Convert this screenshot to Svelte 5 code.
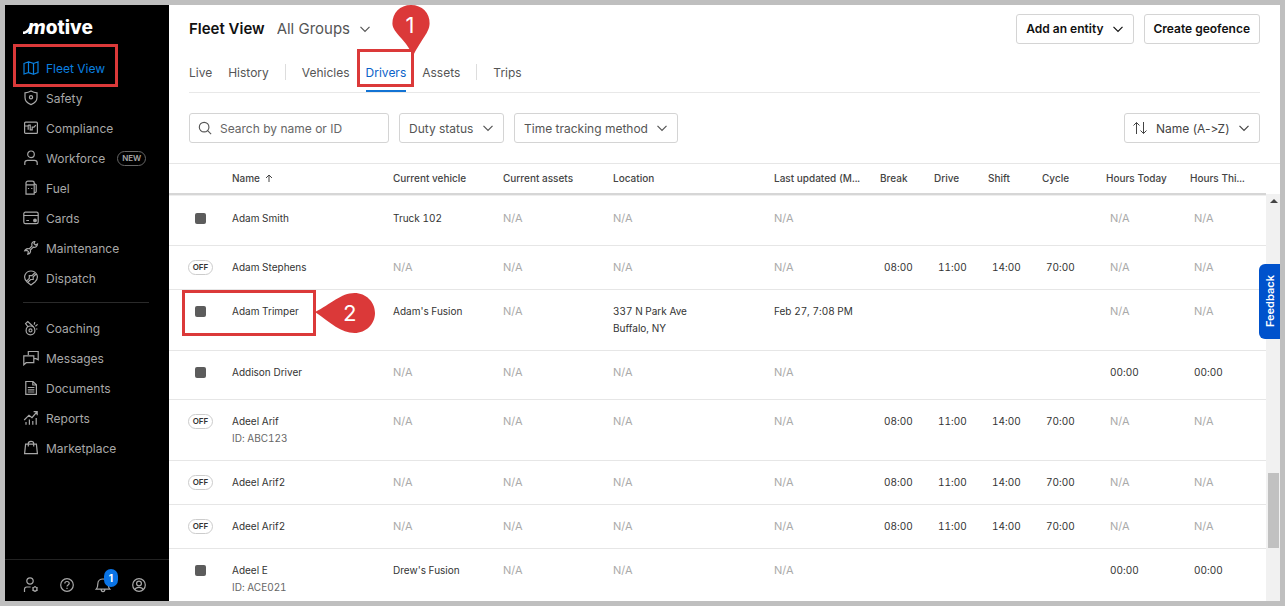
<script>
  let search = "";
  let group = "All Groups";
  let duty = "Duty status";
  let tracking = "Time tracking method";
  let sort = "Name (A->Z)";
  let activeTab = "Drivers";

  const mainNav = [
    { label: "Fleet View", icon: "map", active: true },
    { label: "Safety", icon: "shield" },
    { label: "Compliance", icon: "compliance" },
    { label: "Workforce", icon: "person", tag: "NEW" },
    { label: "Fuel", icon: "fuel" },
    { label: "Cards", icon: "card" },
    { label: "Maintenance", icon: "wrench" },
    { label: "Dispatch", icon: "dispatch" },
  ];

  const moreNav = [
    { label: "Coaching", icon: "whistle" },
    { label: "Messages", icon: "messages" },
    { label: "Documents", icon: "document" },
    { label: "Reports", icon: "reports" },
    { label: "Marketplace", icon: "bag" },
  ];

  const footer = [
    { label: "Admin", icon: "admin" },
    { label: "Help", icon: "help" },
    { label: "Notifications", icon: "bell", count: 1 },
    { label: "Profile", icon: "profile" },
  ];

  const tabGroups = [["Live", "History"], ["Vehicles", "Drivers", "Assets"], ["Trips"]];

  const columns = [
    { label: "", width: 63 },
    { label: "Name", width: 161, sorted: true },
    { label: "Current vehicle", width: 110 },
    { label: "Current assets", width: 110 },
    { label: "Location", width: 161 },
    { label: "Last updated (M...", width: 106 },
    { label: "Break", width: 54 },
    { label: "Drive", width: 54 },
    { label: "Shift", width: 54 },
    { label: "Cycle", width: 64 },
    { label: "Hours Today", width: 84 },
    { label: "Hours Thi...", width: 76 },
  ];

  const clocks = ["08:00", "11:00", "14:00", "70:00"];
  const none = ["", "", "", ""];

  const drivers = [
    { name: "Adam Smith", vehicle: "Truck 102", clocks: none },
    { name: "Adam Stephens", off: true, clocks },
    {
      name: "Adam Trimper",
      vehicle: "Adam's Fusion",
      location: ["337 N Park Ave", "Buffalo, NY"],
      updated: "Feb 27, 7:08 PM",
      clocks: none,
      marked: true,
    },
    { name: "Addison Driver", clocks: none, hours: "00:00" },
    { name: "Adeel Arif", id: "ABC123", off: true, clocks },
    { name: "Adeel Arif2", off: true, clocks },
    { name: "Adeel Arif2", off: true, clocks },
    { name: "Adeel E", id: "ACE021", vehicle: "Drew's Fusion", clocks: none, hours: "00:00" },
  ];

  const rowSize = (d) => {
    if (d.id || d.location) return "tall";
    return d.off ? "short" : "medium";
  };
</script>

{#snippet icon(name)}
  <svg class="icon" viewBox="0 0 16 16" aria-hidden="true">
    {#if name === "map"}
      <path d="M1 3.5 L5.5 1.8 V12.6 L1 14 Z M5.5 1.8 L10.5 3.5 V14.2 L5.5 12.6 M10.5 3.5 L15 1.8 V12.6 L10.5 14.2" />
    {:else if name === "shield"}
      <path d="M8 1 C10 2.2 12 2.7 14 2.8 V7.5 C14 11 11 13.5 8 14.6 C5 13.5 2 11 2 7.5 V2.8 C4 2.7 6 2.2 8 1 Z" />
      <circle cx="8" cy="7.3" r="1.6" />
    {:else if name === "compliance"}
      <rect x="1.6" y="2.2" width="12.8" height="11.2" rx="1" />
      <path d="M2 6 H5.2 M5.2 5 V9.8 M5.2 5.2 H7.2 V9.8 H9.2 V7.2 H11 L12.8 5.2" />
    {:else if name === "person"}
      <circle cx="8" cy="4.3" r="3.3" />
      <path d="M1.8 15 V12.8 C1.8 11.2 3 10.3 4.5 10.3 H11.5 C13 10.3 14.2 11.2 14.2 12.8 V15" />
    {:else if name === "fuel"}
      <path d="M3 14.2 V3 C3 1.8 3.8 1.2 5 1.2 H9.2 C10.4 1.2 11.2 1.8 11.2 3 V14.2 Z M3 4.8 H11.2 M5.5 8 V9 M8.8 8 V9 M11.2 3.5 L13.2 4.8 V11.5 C13.2 12.3 12.5 12.6 11.2 12.5" />
    {:else if name === "card"}
      <rect x="0.8" y="2.2" width="14.4" height="11.4" rx="1.6" />
      <path d="M0.8 5.5 H15.2 M3.3 10.5 H6" />
      <circle class="solid" cx="12" cy="10.4" r="1.3" />
    {:else if name === "wrench"}
      <path d="M11.8 1.5 C9.8 1.3 8.2 3.2 8.9 5.2 L9 6 L6.2 8.8 C4.6 8.2 2.4 8.8 1.7 10.8 L4 10.3 L5.4 11.7 L4.8 14.2 C7 13.8 8 11.8 7.4 10 L10.3 7.1 C12.2 7.8 14.5 6.3 14.5 4 L12.5 5 L11 3.6 Z" />
    {:else if name === "dispatch"}
      <path d="M8 15 L3.8 11.7 C-1 6.7 3 1 8 1 C13 1 17 6.7 12.2 11.7 Z M3.8 10.8 L6.3 8.3 V5.6 H9 L11.7 3 M5 12 L7.6 9.5 H10.2 V6.8 L12.9 4.2" />
    {:else if name === "whistle"}
      <circle cx="7.5" cy="10.4" r="4.4" />
      <circle cx="7.5" cy="10.4" r="1.5" />
      <path d="M5 6.8 L2.6 3.6 L4.8 1.6 L10.6 7 M11.2 4.6 L11.8 2.2 M12.4 6.2 L14.6 4.4 M13 9 H14.4" />
    {:else if name === "messages"}
      <path d="M5.3 5 V1.5 H15.2 V9.7 L13 8.6 H11 M0.8 14.8 V5.8 H10.8 V12.7 H3.2 Z" />
    {:else if name === "document"}
      <path d="M2.8 1.5 H10 L13.4 4.8 V14.3 H2.8 Z M9.8 1.7 V5 H13.2 M4.8 7.5 H11.4 M4.8 9.8 H11.4 M4.8 12 H11.4" />
    {:else if name === "reports"}
      <path d="M1.2 10 L6 5.2 L9 7.6 L13.8 2 M10.6 1.6 H14.2 V5.2 M3 12 V14.8 M6.4 9.5 V14.8 M9.8 11 V14.8 M13.2 8 V14.8" />
    {:else if name === "bag"}
      <path d="M2.6 4.2 H13.4 L14.4 13.6 H1.6 Z M5.3 6.4 V3.4 C5.3 0.7 10.7 0.7 10.7 3.4 V6.4" />
    {:else if name === "admin"}
      <circle cx="7" cy="4" r="3.2" />
      <path d="M1.5 15 V12.3 C1.5 10.8 2.5 10 3.8 10 H7.6" />
      <circle cx="12" cy="12" r="2" />
      <path d="M12 9 V10 M12 14 V15 M9.4 10.5 L10.3 11 M13.7 13 L14.6 13.5 M9.4 13.5 L10.3 13 M13.7 11 L14.6 10.5" />
    {:else if name === "help"}
      <circle cx="8" cy="8" r="6.3" />
      <path d="M5.8 6.5 C5.8 3.8 10.2 3.9 10.2 6.4 C10.2 8 8 8 8 9.6 M8 10.8 V12" />
    {:else if name === "bell"}
      <path d="M1.2 12.2 C2.8 10.8 2.8 9 2.8 7 C2.8 0.3 13.2 0.3 13.2 7 C13.2 9 13.2 10.8 14.8 12.2 Z M6.2 12.5 C6.2 15.2 9.8 15.2 9.8 12.5" />
    {:else if name === "profile"}
      <circle cx="8" cy="8" r="6.3" />
      <circle cx="8" cy="6.5" r="2.4" />
      <path d="M4 12.6 C4.6 10.4 5.8 10.4 8 10.4 C10.2 10.4 11.4 10.4 12 12.6" />
    {/if}
  </svg>
{/snippet}

{#snippet chevron()}
  <svg class="chevron" viewBox="0 0 12 12" aria-hidden="true"><path d="M1.5 3.8 L6 8.3 L10.5 3.8" /></svg>
{/snippet}

{#snippet navItem(item)}
  <li>
    <a href="#{item.icon}" class:active={item.active}>
      {@render icon(item.icon)}
      <span>{item.label}</span>
      {#if item.tag}<em class="tag">{item.tag}</em>{/if}
    </a>
    {#if item.active}<div class="mark mark-nav"></div>{/if}
  </li>
{/snippet}

{#snippet value(v)}
  {#if v === undefined}<span class="na">N/A</span>{:else}{v}{/if}
{/snippet}

<div class="app">
  <aside>
    <a class="logo" href="#home" aria-label="motive">
      <svg viewBox="0 0 9 16" aria-hidden="true"><path d="M0 15 V12.6 C3 12.6 4.5 10.5 7 6.5 L9 8 C6.5 12.5 4.5 15 0 15 Z" /></svg>
      <span><i>m</i>otive</span>
    </a>
    <nav>
      <ul>
        {#each mainNav as item}{@render navItem(item)}{/each}
      </ul>
      <hr />
      <ul>
        {#each moreNav as item}{@render navItem(item)}{/each}
      </ul>
    </nav>
    <div class="foot">
      {#each footer as item}
        <button aria-label={item.label}>
          {@render icon(item.icon)}
          {#if item.count}<span class="count">{item.count}</span>{/if}
        </button>
      {/each}
    </div>
  </aside>

  <main>
    <header>
      <h1>Fleet View</h1>
      <div class="select plain">
        <select aria-label="Group" bind:value={group}><option>All Groups</option></select>
        {@render chevron()}
      </div>
      <div class="actions">
        <button class="btn">Add an entity {@render chevron()}</button>
        <button class="btn">Create geofence</button>
      </div>
    </header>

    <div class="tabs">
      {#each tabGroups as tabs, i}
        {#if i > 0}<span class="sep"></span>{/if}
        {#each tabs as tab}
          <button class="tab" class:current={tab === activeTab} on:click={() => (activeTab = tab)}>
            {tab}
            {#if tab === "Drivers"}
              <span class="mark mark-tab"></span>
              <svg class="pin pin-one" viewBox="0 0 38 51" aria-hidden="true">
                <path d="M19 0 C30 0 38 8 37.6 18.5 C37.2 28 30 33 21 51 C14 34 .6 28 .4 18.5 C.3 8 8 0 19 0 Z" />
                <text x="18" y="28">1</text>
              </svg>
            {/if}
          </button>
        {/each}
      {/each}
    </div>

    <div class="filters">
      <label class="search">
        <svg viewBox="0 0 16 16" aria-hidden="true"><circle cx="7" cy="7" r="5.5" /><path d="M11 11 L15 15" /></svg>
        <input type="text" placeholder="Search by name or ID" aria-label="Search by name or ID" bind:value={search} />
      </label>
      <div class="select">
        <select aria-label="Duty status" bind:value={duty}><option>Duty status</option></select>
        {@render chevron()}
      </div>
      <div class="select">
        <select aria-label="Time tracking method" bind:value={tracking}><option>Time tracking method</option></select>
        {@render chevron()}
      </div>
      <div class="select sort">
        <svg class="arrows" viewBox="0 0 16 14" aria-hidden="true"><path d="M4.5 13 V1.5 M1.5 4.5 L4.5 1.5 L7.5 4.5 M11.5 1 V12.5 M8.5 9.5 L11.5 12.5 L14.5 9.5" /></svg>
        <select aria-label="Sort" bind:value={sort}><option>{"Name (A->Z)"}</option></select>
        {@render chevron()}
      </div>
    </div>

    <div class="grid">
      <div class="table-wrap">
        <table>
          <colgroup>
            {#each columns as col}<col style="width: {col.width}px" />{/each}
          </colgroup>
          <thead>
            <tr>
              {#each columns as col}
                <th scope="col">
                  {col.label}
                  {#if col.sorted}
                    <svg class="up" viewBox="0 0 8 8" aria-hidden="true"><path d="M4 8 V1 M1 4 L4 1 L7 4" /></svg>
                  {/if}
                </th>
              {/each}
            </tr>
          </thead>
          <tbody>
            {#each drivers as d}
              <tr class={rowSize(d)}>
                <td class="status">
                  <div class="status-box">
                    {#if d.off}<span class="off">OFF</span>{:else}<span class="square"></span>{/if}
                    {#if d.marked}
                      <div class="mark mark-row"></div>
                      <svg class="pin pin-two" viewBox="0 0 60 40" aria-hidden="true">
                        <path d="M0 19 C16 11 26 0 39.5 0 C51 0 60 9 60 20 C60 31 51 40 39.5 40 C26 40 16 30 0 19 Z" />
                        <text x="35" y="28">2</text>
                      </svg>
                    {/if}
                  </div>
                </td>
                <td>
                  {d.name}
                  {#if d.id}<div class="id">ID: {d.id}</div>{/if}
                </td>
                <td>{@render value(d.vehicle)}</td>
                <td>{@render value(undefined)}</td>
                <td>
                  {#if d.location}
                    {#each d.location as line}<div>{line}</div>{/each}
                  {:else}
                    {@render value(undefined)}
                  {/if}
                </td>
                <td>{@render value(d.updated)}</td>
                {#each d.clocks as time}<td class="time">{time}</td>{/each}
                <td class="time">{@render value(d.hours)}</td>
                <td class="time">{@render value(d.hours)}</td>
              </tr>
            {/each}
          </tbody>
        </table>
      </div>
      <div class="scrollbar">
        <span class="arrow"></span>
        <span class="thumb"></span>
      </div>
    </div>

    <button class="feedback">Feedback</button>
  </main>
</div>

<style>
  :global(body) {
    margin: 0;
  }

  .app {
    display: flex;
    height: 100vh;
    box-sizing: border-box;
    border: 5px solid #bfbfbf;
    background: #fff;
    font-family: Inter, "Liberation Sans", sans-serif;
    font-size: 12px;
    font-feature-settings: "calt" 0;
    color: #555;
    overflow: hidden;
  }

  .app * {
    box-sizing: border-box;
  }

  button,
  select,
  input {
    font: inherit;
    font-feature-settings: inherit;
    color: inherit;
    background: none;
    border: 0;
    padding: 0;
    margin: 0;
  }

  svg {
    fill: none;
    stroke: currentColor;
    flex: none;
  }

  /* sidebar */
  aside {
    display: flex;
    flex-direction: column;
    flex: none;
    width: 164px;
    background: #000;
    color: #a8a8a8;
  }

  .logo {
    display: flex;
    align-items: center;
    height: 44px;
    padding-left: 18px;
    color: #fff;
    font-size: 19px;
    font-weight: 800;
    text-decoration: none;
  }

  .logo svg {
    width: 9px;
    height: 16px;
    margin-right: -4px;
    fill: #fff;
    stroke: none;
  }

  ul {
    list-style: none;
    margin: 0;
    padding: 0;
  }

  nav {
    padding-top: 4px;
    flex: 1;
  }

  li {
    position: relative;
  }

  li a {
    display: flex;
    align-items: center;
    gap: 7px;
    height: 30px;
    padding-left: 18px;
    color: inherit;
    text-decoration: none;
  }

  li a.active {
    color: #0a80e0;
  }

  .icon {
    width: 16px;
    height: 16px;
    stroke-width: 1.2;
  }

  .icon .solid {
    fill: currentColor;
  }

  .tag {
    margin-left: 5px;
    padding: 0 4px;
    border: 1px solid #666;
    border-radius: 8px;
    font-size: 8px;
    font-style: normal;
    font-weight: 600;
    line-height: 13px;
  }

  hr {
    margin: 9px 20px 10px 18px;
    border: 0;
    border-top: 1px solid #2a2a2a;
  }

  .foot {
    display: flex;
    gap: 20px;
    height: 42px;
    padding: 9px 0 0 18px;
    border-top: 1px solid #222;
  }

  .foot button {
    position: relative;
    height: 32px;
  }

  .foot .icon {
    display: block;
    margin: auto;
  }

  .count {
    position: absolute;
    top: 0;
    left: 9px;
    width: 14px;
    border-radius: 9px;
    background: #0a74e6;
    color: #fff;
    font-size: 10px;
    font-weight: 700;
    line-height: 18px;
  }

  /* main column */
  main {
    position: relative;
    display: flex;
    flex-direction: column;
    flex: 1;
    min-width: 0;
  }

  header {
    display: flex;
    align-items: center;
    height: 47px;
    padding: 0 20px;
  }

  h1 {
    margin: 0 12px 0 0;
    font-size: 15px;
    font-weight: 600;
    color: #111;
  }

  .actions {
    display: flex;
    gap: 10px;
    margin-left: auto;
  }

  .btn,
  .select,
  .search {
    display: flex;
    align-items: center;
    height: 30px;
    padding: 0 9px;
    border: 1px solid #d4d4d4;
    border-radius: 3px;
  }

  .btn {
    gap: 8px;
    color: #111;
    font-weight: 600;
  }

  .chevron {
    width: 12px;
    height: 12px;
    stroke-width: 1.2;
  }

  .select {
    position: relative;
  }

  .select select {
    appearance: none;
    padding-right: 20px;
    margin-right: -12px;
    outline: 0;
  }

  .select .chevron {
    pointer-events: none;
  }

  .select.plain {
    padding: 0;
    border: 0;
    font-size: 15px;
  }

  .tabs {
    display: flex;
    align-items: center;
    gap: 16px;
    height: 41px;
    margin: 0 20px;
    border-bottom: 1px solid #e8e8e8;
  }

  .tab {
    position: relative;
    height: 40px;
    cursor: pointer;
  }

  .tab.current {
    color: #0a62c9;
  }

  .tab.current::after {
    content: "";
    position: absolute;
    left: 0;
    right: 0;
    bottom: 0;
    height: 2px;
    background: #1273d4;
  }

  .sep {
    width: 1px;
    height: 16px;
    background: #ddd;
  }

  .filters {
    display: flex;
    gap: 10px;
    padding: 20px;
  }

  .search {
    width: 200px;
    padding: 0 8px;
    gap: 8px;
  }

  .search svg {
    width: 14px;
    height: 14px;
    stroke-width: 1.3;
  }

  .search input {
    flex: 1;
    min-width: 0;
    outline: 0;
  }

  .search input::placeholder {
    color: #666;
    opacity: 1;
  }

  .sort {
    margin-left: auto;
    padding-left: 7px;
    color: #444;
  }

  .arrows {
    width: 16px;
    height: 14px;
    margin-right: 8px;
  }

  /* driver table */
  .grid {
    display: flex;
    flex: 1;
    min-height: 0;
    border-top: 1px solid #e6e6e6;
  }

  .table-wrap {
    flex: 1;
    min-width: 0;
    overflow: hidden;
  }

  table {
    width: 100%;
    table-layout: fixed;
    border-spacing: 0;
    font-size: 10px;
    font-variant-numeric: tabular-nums;
    line-height: 17px;
    color: #333;
  }

  th {
    height: 31px;
    padding: 0;
    border-bottom: 2px solid #d6d6d6;
    color: #444;
    font-weight: 500;
    text-align: left;
    white-space: nowrap;
  }

  .up {
    width: 8px;
    height: 8px;
    margin-left: 2px;
  }

  td {
    padding: 13px 0 0;
    border-bottom: 1px solid #e6e6e6;
    vertical-align: top;
  }

  tbody tr:first-child td {
    border-top: 1px solid #eee;
    padding-top: 14px;
  }

  .short td {
    height: 44px;
  }

  .medium td {
    height: 49px;
  }

  .medium:first-child td {
    height: 51px;
  }

  .tall td {
    height: 61px;
  }

  td.time {
    padding-left: 4px;
  }

  .na {
    color: #aaa;
    font-size: 11px;
  }

  .id {
    color: #666;
  }

  td.status {
    padding-left: 19px;
  }

  .status-box {
    position: relative;
    display: flex;
    align-items: center;
    justify-content: center;
    width: 25px;
    height: 17px;
  }

  .off {
    width: 25px;
    border: 1px solid #ccc;
    border-radius: 8px;
    font-size: 8px;
    font-weight: 600;
    line-height: 13px;
    text-align: center;
  }

  .square {
    width: 11px;
    height: 11px;
    border-radius: 2px;
    background: #5c5c5c;
  }

  .scrollbar {
    flex: none;
    width: 14px;
    margin-top: 30px;
    padding: 0 1px 0 2px;
    background: #f1f1f1;
  }

  .arrow {
    display: block;
    width: 0;
    margin: 5px auto 0;
    border: 4px solid transparent;
    border-top: 0;
    border-bottom-color: #444;
  }

  .thumb {
    display: block;
    height: 75px;
    margin-top: 270px;
    background: #c1c1c1;
  }

  .feedback {
    position: absolute;
    right: 0;
    top: 259px;
    width: 21px;
    height: 75px;
    border-radius: 0 6px 6px 0;
    background: #0052cc;
    color: #fff;
    font-size: 11px;
    font-weight: 600;
    writing-mode: vertical-rl;
    transform: rotate(180deg);
  }

  /* numbered callouts */
  .mark {
    position: absolute;
    z-index: 1;
    border: 3px solid #db3939;
    pointer-events: none;
  }

  .mark-nav {
    left: 8px;
    top: -9px;
    width: 105px;
    height: 43px;
  }

  .mark-tab {
    left: -9px;
    top: -3px;
    width: 57px;
    height: 38px;
  }

  .mark-row {
    left: -6px;
    top: -13px;
    width: 134px;
    height: 46px;
  }

  .pin {
    position: absolute;
    z-index: 2;
    fill: #db3939;
    stroke: none;
    pointer-events: none;
  }

  .pin text {
    fill: #fff;
    font-size: 22px;
    text-anchor: middle;
  }

  .pin-one {
    left: 26px;
    top: -47px;
    width: 38px;
    height: 51px;
  }

  .pin-two {
    left: 127px;
    top: -10px;
    width: 60px;
    height: 40px;
  }
</style>
